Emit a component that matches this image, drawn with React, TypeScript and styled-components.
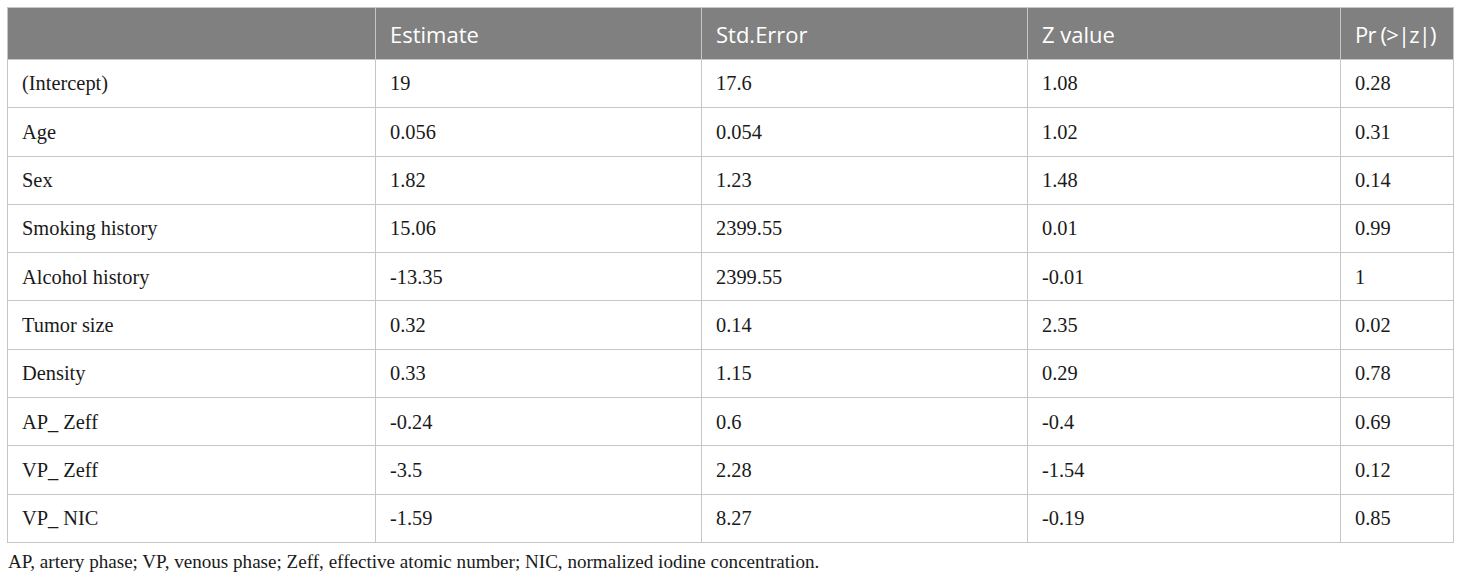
import React from "react";
import styled, { createGlobalStyle } from "styled-components";

const GlobalStyle = createGlobalStyle`
  html, body { margin: 0; padding: 0; background: #ffffff; }
  body { font-family: "Liberation Serif", "Times New Roman", serif; color: #1a1a1a; }
`;

const Page = styled.div`
  padding: 7px 8px 0 7px;
  width: 1460px;
  box-sizing: border-box;
`;

const Table = styled.table`
  border-collapse: collapse;
  width: 1446px;
  table-layout: fixed;
`;

const HeadCell = styled.th<{ $w: number; $tight?: boolean }>`
  width: ${(p) => p.$w}px;
  height: 52px;
  padding: 0 0 0 14px;
  box-sizing: border-box;
  background: #808080;
  color: #ffffff;
  font-family: "Open Sans", "Noto Sans", sans-serif;
  font-weight: 400;
  font-size: 22px;
  letter-spacing: ${(p) => (p.$tight ? "-0.8px" : "0")};
  text-align: left;
  white-space: nowrap;
  border: 1px solid #c6c6c6;
`;

const Row = styled.tr`
  height: 48.3px;
`;

const Cell = styled.td`
  padding: 0 0 0 14px;
  font-size: 20.4px;
  line-height: 1.1;
  color: #1a1a1a;
  border: 1px solid #c6c6c6;
  white-space: nowrap;
`;

const Caption = styled.p`
  margin: 8px 0 0 1px;
  font-size: 19.1px;
  line-height: 1.2;
  color: #1a1a1a;
`;

const columns = [
  { label: "", w: 368 },
  { label: "Estimate", w: 326 },
  { label: "Std.Error", w: 326 },
  { label: "Z value", w: 313 },
  { label: "Pr (>|z|)", w: 113, tight: true },
];

const rows: string[][] = [
  ["(Intercept)", "19", "17.6", "1.08", "0.28"],
  ["Age", "0.056", "0.054", "1.02", "0.31"],
  ["Sex", "1.82", "1.23", "1.48", "0.14"],
  ["Smoking history", "15.06", "2399.55", "0.01", "0.99"],
  ["Alcohol history", "-13.35", "2399.55", "-0.01", "1"],
  ["Tumor size", "0.32", "0.14", "2.35", "0.02"],
  ["Density", "0.33", "1.15", "0.29", "0.78"],
  ["AP_ Zeff", "-0.24", "0.6", "-0.4", "0.69"],
  ["VP_ Zeff", "-3.5", "2.28", "-1.54", "0.12"],
  ["VP_ NIC", "-1.59", "8.27", "-0.19", "0.85"],
];

export default function App() {
  return (
    <>
      <GlobalStyle />
      <Page>
        <Table>
          <thead>
            <tr>
              {columns.map((c, i) => (
                <HeadCell key={i} $w={c.w} $tight={c.tight}>
                  {c.label}
                </HeadCell>
              ))}
            </tr>
          </thead>
          <tbody>
            {rows.map((r, i) => (
              <Row key={i}>
                {r.map((v, j) => (
                  <Cell key={j}>{v}</Cell>
                ))}
              </Row>
            ))}
          </tbody>
        </Table>
        <Caption>
          AP, artery phase; VP, venous phase; Zeff, effective atomic number; NIC, normalized iodine concentration.
        </Caption>
      </Page>
    </>
  );
}
